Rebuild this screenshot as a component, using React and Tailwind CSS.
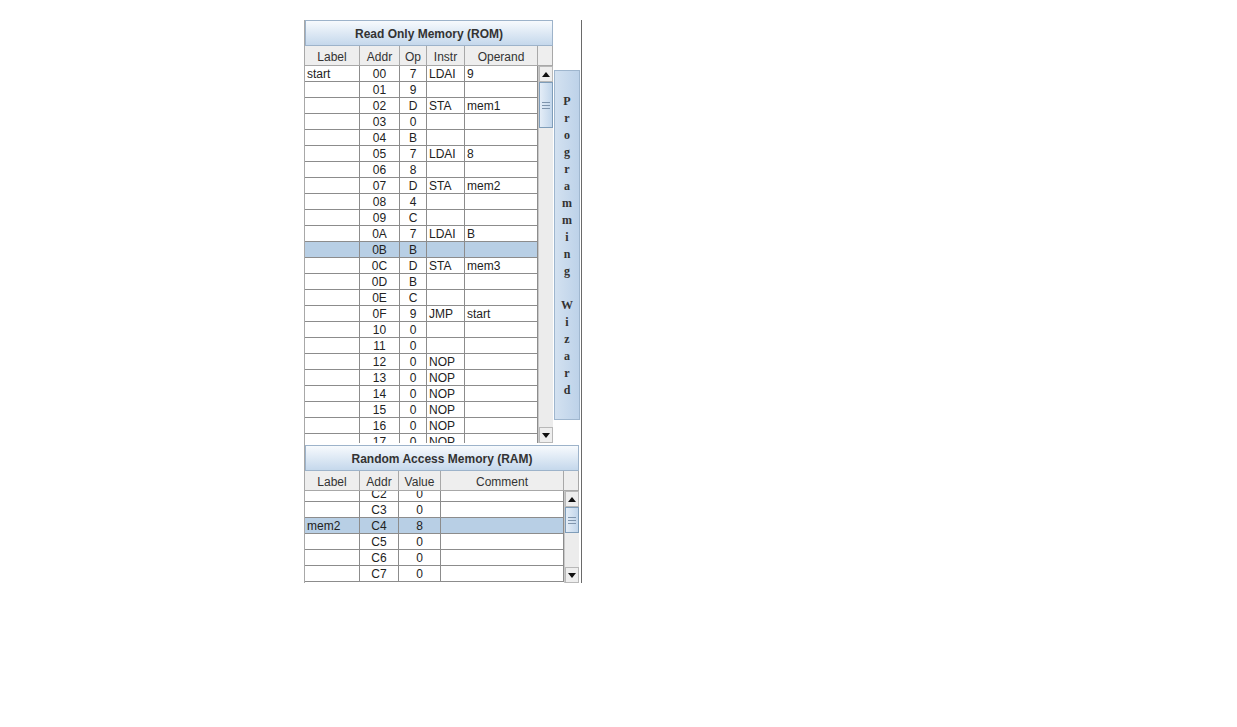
import React from 'react';

const rom = [
  ['start', '00', '7', 'LDAI', '9'],
  ['', '01', '9', '', ''],
  ['', '02', 'D', 'STA', 'mem1'],
  ['', '03', '0', '', ''],
  ['', '04', 'B', '', ''],
  ['', '05', '7', 'LDAI', '8'],
  ['', '06', '8', '', ''],
  ['', '07', 'D', 'STA', 'mem2'],
  ['', '08', '4', '', ''],
  ['', '09', 'C', '', ''],
  ['', '0A', '7', 'LDAI', 'B'],
  ['', '0B', 'B', '', ''],
  ['', '0C', 'D', 'STA', 'mem3'],
  ['', '0D', 'B', '', ''],
  ['', '0E', 'C', '', ''],
  ['', '0F', '9', 'JMP', 'start'],
  ['', '10', '0', '', ''],
  ['', '11', '0', '', ''],
  ['', '12', '0', 'NOP', ''],
  ['', '13', '0', 'NOP', ''],
  ['', '14', '0', 'NOP', ''],
  ['', '15', '0', 'NOP', ''],
  ['', '16', '0', 'NOP', ''],
  ['', '17', '0', 'NOP', ''],
  ['', '18', '0', 'NOP', ''],
];

const ram = [
  ['', 'C2', '0', ''],
  ['', 'C3', '0', ''],
  ['mem2', 'C4', '8', ''],
  ['', 'C5', '0', ''],
  ['', 'C6', '0', ''],
  ['', 'C7', '0', ''],
];

const wizard = 'Programming Wizard'.split('');

function Arrow({ down }) {
  return (
    <div className="h-[16px] flex items-center justify-center bg-[#eeeeee] border border-[#b8b8b8]">
      <svg width="8" height="5" viewBox="0 0 8 5">
        <path d={down ? 'M0 0h8L4 5z' : 'M0 5h8L4 0z'} fill="#111" />
      </svg>
    </div>
  );
}

function Scrollbar({ thumbH }) {
  return (
    <div className="flex flex-col h-full bg-[#ececec] border-l border-[#c8c8c8]">
      <Arrow />
      <div className="flex-1 flex flex-col">
        <div
          className="border border-[#7f9db9] bg-gradient-to-r from-[#e4edf7] to-[#c2d6eb] flex flex-col items-center justify-center gap-[2px]"
          style={{ height: thumbH }}
        >
          <div className="w-[8px] h-px bg-[#7f95ad]" />
          <div className="w-[8px] h-px bg-[#7f95ad]" />
          <div className="w-[8px] h-px bg-[#7f95ad]" />
        </div>
      </div>
      <Arrow down />
    </div>
  );
}

function Title({ children }) {
  return (
    <div className="h-[26px] pt-[2px] flex items-center justify-center font-bold text-[12px] text-[#333] border border-[#9db3ca] bg-gradient-to-b from-[#f7fafd] to-[#c5d8ec]">
      {children}
    </div>
  );
}

function Header({ cols }) {
  return (
    <div className="flex h-[20px]">
      {cols.map(([label, w], i) => (
        <div
          key={i}
          className="flex items-center justify-center pt-[2px] bg-[#eeeeee] border-r border-b border-[#a8a8a8] text-[12px] text-[#333]"
          style={{ width: w }}
        >
          {label}
        </div>
      ))}
    </div>
  );
}

function Row({ cells, widths, aligns, selected }) {
  return (
    <div className={`flex h-[16px] ${selected ? 'bg-[#b8cfe5]' : 'bg-white'}`}>
      {cells.map((c, i) => (
        <div
          key={i}
          className={`h-[16px] border-r border-b border-[#8c8c8c] leading-[17px] whitespace-nowrap overflow-hidden ${aligns[i] === 'c' ? 'text-center' : 'pl-[2px]'}`}
          style={{ width: widths[i] }}
        >
          {c}
        </div>
      ))}
    </div>
  );
}

export default function App() {
  const romW = [55, 40, 27, 38, 73];
  const ramW = [55, 39, 42, 123];
  return (
    <div className="w-[1237px] h-[727px] bg-white font-['Liberation_Sans',Arial,sans-serif] text-[12px] text-[#222]">
      <div className="flex pl-[304px] pt-[20px]">
        <div className="w-[277px] flex flex-col border-l border-[#a8a8a8]">
          <div className="flex h-[423px]">
            {/* ROM */}
            <div className="w-[248px] flex flex-col">
              <Title>Read Only Memory (ROM)</Title>
              <Header cols={[['Label', 55], ['Addr', 40], ['Op', 27], ['Instr', 38], ['Operand', 73], ['', 15]]} />
              <div className="flex h-[377px]">
                <div className="w-[233px] overflow-hidden">
                  {rom.map((r, i) => (
                    <Row key={i} cells={r} widths={romW} aligns={['l', 'c', 'c', 'l', 'l']} selected={i === 11} />
                  ))}
                </div>
                <div className="w-[15px]">
                  <Scrollbar thumbH={46} />
                </div>
              </div>
            </div>
            {/* wizard tab */}
            <div className="ml-[1px] mt-[50px] w-[26px] h-[350px] border border-[#9fb6ce] bg-gradient-to-r from-[#d3e1f0] to-[#bdd2e9] flex flex-col items-center pt-[22px] font-['Liberation_Serif',serif] font-bold text-[12px] text-[#333]">
              {wizard.map((ch, i) => (
                <div key={i} className="h-[17px] leading-[17px]">{ch === ' ' ? '\u00a0' : ch}</div>
              ))}
            </div>
          </div>
          {/* RAM */}
          <div className="mt-[2px] w-[274px] flex flex-col">
            <Title>Random Access Memory (RAM)</Title>
            <Header cols={[['Label', 55], ['Addr', 39], ['Value', 42], ['Comment', 123], ['', 15]]} />
            <div className="flex h-[92px]">
              <div className="w-[259px] overflow-hidden">
                <div className="-mt-[5px]">
                  {ram.map((r, i) => (
                    <Row key={i} cells={r} widths={ramW} aligns={['l', 'c', 'c', 'l']} selected={i === 2} />
                  ))}
                </div>
              </div>
              <div className="w-[15px]">
                <Scrollbar thumbH={26} />
              </div>
            </div>
          </div>
        </div>
        <div className="w-px h-[563px] bg-[#6a6a6a]" />
      </div>
    </div>
  );
}
